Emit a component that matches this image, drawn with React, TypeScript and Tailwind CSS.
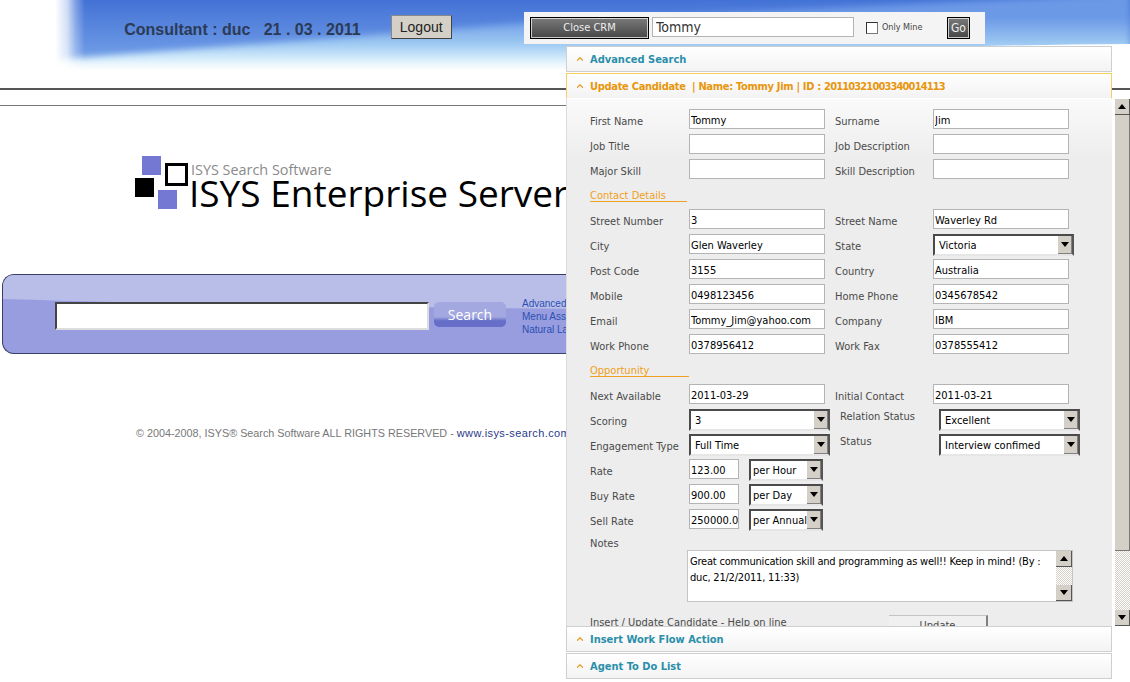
import React from 'react';
import { ChevronUp } from 'lucide-react';

const sans = 'font-["DejaVu_Sans_Condensed","Noto_Sans",sans-serif]';

const Field = ({ value = '', width = 'w-[136px]' }: { value?: string; width?: string }) => (
  <input
    readOnly
    value={value}
    className={`${width} h-5 shrink-0 border border-[#b4b4b4] bg-white pl-[1px] pt-[2px] text-[11px] text-black outline-none ${sans}`}
  />
);

const Select = ({ value, width = 'w-[141px]', pad = 'pl-1' }: { value: string; width?: string; pad?: string }) => (
  <div className={`${width} h-[22px] shrink-0 flex items-center border-2 border-[#4a4a4a] border-r-[#555] border-b-[#e6e6e6] bg-white text-[11px] text-black ${sans}`}>
    <span className={`flex-1 whitespace-nowrap overflow-hidden pt-[2px] ${pad}`}>{value}</span>
    <span className="w-[14px] h-[18px] shrink-0 flex items-center justify-center bg-[#d4d0c8] border-r border-b border-[#808080]">
      <span className="border-x-[4px] border-x-transparent border-t-[5px] border-t-black" />
    </span>
  </div>
);

const Label = ({ children, width = 'w-[99px]' }: { children: React.ReactNode; width?: string }) => (
  <span className={`${width} shrink-0 pt-[5px] text-[11px] leading-4 text-[#4a4a4a] ${sans}`}>{children}</span>
);

const Row = ({ children }: { children: React.ReactNode }) => (
  <div className="flex h-[25px] items-start">{children}</div>
);

const Pair = ({ a, av, b, bv }: { a: string; av?: string; b: string; bv?: string }) => (
  <Row>
    <Label>{a}</Label>
    <Field value={av} />
    <span className="w-[10px] shrink-0" />
    <Label width="w-[98px]">{b}</Label>
    <Field value={bv} />
  </Row>
);

const SectionTitle = ({ title, line }: { title: string; line: string }) => (
  <div className="flex h-[25px] items-start">
    <span className={`${line} h-[18px] border-b border-[#f0a020] pt-[7px] text-[11px] leading-[10px] text-[#f0a020] ${sans}`}>
      {title}
    </span>
  </div>
);

const AccordionHead = ({ children, active }: { children: React.ReactNode; active?: boolean }) => (
  <div
    className={`flex h-[26px] items-center gap-[5px] border pl-[8px] text-[11px] font-bold bg-linear-to-b from-white to-[#f3f3f3] ${sans} ${
      active ? 'border-[#f5d060] border-b-transparent text-[#e8960c]' : 'border-[#cfcfcf] text-[#2a8faa]'
    }`}
  >
    <ChevronUp size={10} strokeWidth={3} className="text-[#e8a030]" />
    <span className="whitespace-pre pt-[2px]">{children}</span>
  </div>
);

const ScrollButton = ({ up }: { up?: boolean }) => (
  <div className="flex h-4 items-center justify-center border-r border-b border-[#555] bg-[#d4d0c8]">
    <span className={`border-x-[4px] border-x-transparent ${up ? 'border-b-[5px] border-b-black' : 'border-t-[5px] border-t-black'}`} />
  </div>
);

const RateRow = ({ label, value, unit }: { label: string; value: string; unit: string }) => (
  <Row>
    <Label>{label}</Label>
    <Field value={value} width="w-[50px]" />
    <span className="w-[10px] shrink-0" />
    <Select value={unit} width="w-[74px]" pad="pl-[2px]" />
  </Row>
);

const CandidateForm = () => (
  <div className="flex-1 overflow-hidden border-l border-[#dcdcdc] pl-[23px] pt-[10px] bg-linear-to-b from-[#fafafa] to-[#ededed] to-[60px]">
    <Pair a="First Name" av="Tommy" b="Surname" bv="Jim" />
    <Pair a="Job Title" b="Job Description" />
    <Pair a="Major Skill" b="Skill Description" />
    <SectionTitle title="Contact Details" line="w-[97px]" />
    <Pair a="Street Number" av="3" b="Street Name" bv="Waverley Rd" />
    <Row>
      <Label>City</Label>
      <Field value="Glen Waverley" />
      <span className="w-[10px] shrink-0" />
      <Label width="w-[98px]">State</Label>
      <Select value="Victoria" width="w-[141px]" />
    </Row>
    <Pair a="Post Code" av="3155" b="Country" bv="Australia" />
    <Pair a="Mobile" av="0498123456" b="Home Phone" bv="0345678542" />
    <Pair a="Email" av="Tommy_Jim@yahoo.com" b="Company" bv="IBM" />
    <Pair a="Work Phone" av="0378956412" b="Work Fax" bv="0378555412" />
    <SectionTitle title="Opportunity" line="w-[99px]" />
    <Pair a="Next Available" av="2011-03-29" b="Initial Contact" bv="2011-03-21" />
    <Row>
      <Label>Scoring</Label>
      <Select value="3" />
      <span className="w-[10px] shrink-0" />
      <span className={`w-[99px] shrink-0 text-[11px] leading-4 text-[#4a4a4a] ${sans}`}>Relation Status</span>
      <Select value="Excellent" />
    </Row>
    <Row>
      <Label>Engagement Type</Label>
      <Select value="Full Time" />
      <span className="w-[10px] shrink-0" />
      <span className={`w-[99px] shrink-0 text-[11px] leading-4 text-[#4a4a4a] ${sans}`}>Status</span>
      <Select value="Interview confimed" />
    </Row>
    <RateRow label="Rate" value="123.00" unit="per Hour" />
    <RateRow label="Buy Rate" value="900.00" unit="per Day" />
    <RateRow label="Sell Rate" value="250000.0" unit="per Annual" />
    <div className={`h-[16px] pt-[3px] text-[11px] leading-[13px] text-[#4a4a4a] ${sans}`}>Notes</div>
    <div className="ml-[97px] flex h-[52px] w-[386px] border border-[#c4c4c4] bg-white">
      <p className={`flex-1 px-[2px] pt-[3px] text-[11px] leading-4 tracking-[-0.2px] text-black ${sans}`}>
        Great communication skill and programming as well!! Keep in mind! (By : duc, 21/2/2011, 11:33)
      </p>
      <div className="flex w-4 flex-col justify-between bg-[repeating-conic-gradient(#d4d0c8_0_25%,#ffffff_0_50%)] bg-[length:2px_2px]">
        <ScrollButton up />
        <ScrollButton />
      </div>
    </div>
    <div className={`mt-[13px] flex text-[11px] leading-4 text-[#4a4a4a] ${sans}`}>
      <span className="w-[299px]">Insert / Update Candidate - Help on line</span>
      <span className="flex h-8 w-[99px] justify-center border-t border-r-2 border-[#808080] border-t-[#c4c4c4] bg-[#f0f0f0] pt-[2px]">Update</span>
    </div>
  </div>
);

const CrmPanel = () => (
  <div className="absolute left-[524px] top-3 w-[606px]">
    <div className={`flex h-[32px] w-[461px] items-start gap-[3px] bg-[#f4f4f4] pl-[6px] pt-[5px] ${sans}`}>
      <button className="h-[22px] w-[119px] border border-black bg-linear-to-b from-[#7b7b7b] to-[#464646] text-[11px] text-[#eee] outline outline-1 -outline-offset-2 outline-white/70">
        Close CRM
      </button>
      <input readOnly value="Tommy" className={`h-5 w-[202px] border border-[#b4b4b4] bg-white pl-[3px] text-[14px] text-[#333] outline-none ${sans}`} />
      <span className="ml-[9px] mt-[5px] h-3 w-3 border border-[#777] border-t-[#333] border-l-[#333] bg-white" />
      <span className="ml-[1px] mt-[4px] w-[62px] whitespace-nowrap text-[9px] leading-3 text-[#444]">Only Mine</span>
      <button className="h-[22px] w-[23px] border border-black bg-linear-to-b from-[#7b7b7b] to-[#464646] text-[12px] text-[#eee] outline outline-1 -outline-offset-2 outline-white/70">Go</button>
    </div>
    <div className="ml-[42px] mt-[2px] flex h-[635px] flex-col">
      <div className="w-[546px]"><AccordionHead>Advanced Search</AccordionHead></div>
      <div className="mt-[1px] w-[546px]">
        <AccordionHead active>
          <span className="tracking-[-0.3px]">Update Candidate  | Name: Tommy Jim | ID : </span>
          <span className="tracking-[-0.85px]">20110321003340014113</span>
        </AccordionHead>
      </div>
      <div className="flex h-[527px] shrink-0 bg-white">
        <CandidateForm />
        <div className="ml-[3px] flex w-[15px] flex-col bg-[repeating-conic-gradient(#d4d0c8_0_25%,#ffffff_0_50%)] bg-[length:2px_2px]">
          <ScrollButton up />
          <div className="h-[436px] border-r border-b border-[#777] bg-[#d4d0c8]" />
          <div className="flex-1" />
          <ScrollButton />
        </div>
      </div>
      <div className="w-[546px]"><AccordionHead>Insert Work Flow Action</AccordionHead></div>
      <div className="mt-[1px] w-[546px]"><AccordionHead>Agent To Do List</AccordionHead></div>
    </div>
  </div>
);

const Banner = () => (
  <div className="relative flex h-[70px] items-start overflow-hidden bg-white">
    {/* sky swoosh behind the header */}
    <svg className="absolute inset-0" width="1130" height="70" viewBox="0 0 1130 70">
      <defs>
        <linearGradient id="dark" x1="0" y1="0" x2="0" y2="1">
          <stop offset="0" stopColor="#4372d6" />
          <stop offset="0.7" stopColor="#6a97e4" />
          <stop offset="1" stopColor="#7fabe9" />
        </linearGradient>
        <linearGradient id="light" gradientUnits="userSpaceOnUse" x1="0" y1="18" x2="0" y2="69">
          <stop offset="0" stopColor="#6c99e6" />
          <stop offset="0.5" stopColor="#9cc8f2" />
          <stop offset="0.8" stopColor="#d4ecfb" />
          <stop offset="1" stopColor="#ffffff" />
        </linearGradient>
        <linearGradient id="fade" x1="0" y1="0" x2="1" y2="0">
          <stop offset="0" stopColor="#ffffff" />
          <stop offset="0.4" stopColor="#ffffff" stopOpacity="0.75" />
          <stop offset="0.7" stopColor="#ffffff" stopOpacity="0.3" />
          <stop offset="1" stopColor="#ffffff" stopOpacity="0" />
        </linearGradient>
        <filter id="soft" x="-5%" y="-20%" width="110%" height="140%">
          <feGaussianBlur stdDeviation="3" />
        </filter>
      </defs>
      <rect x="50" width="1080" height="70" fill="url(#dark)" />
      <path d="M50 60 L567 20 L1130 -6 V80 H50Z" fill="url(#light)" filter="url(#soft)" />
      <path d="M560 70 Q800 46 1130 44 L1130 70Z" fill="#ffffff" />
      <rect x="0" width="55" height="70" fill="#ffffff" />
      <rect x="55" width="30" height="70" fill="url(#fade)" />
    </svg>
    <span className="relative -ml-[6px] mt-[21px] text-[11px] font-bold leading-4 text-[#2a5aa0]">E</span>
    <span className="relative ml-[124px] mt-[20px] whitespace-pre font-['Liberation_Sans',sans-serif] text-[16px] font-bold leading-5 text-[#2b3a55]">
      Consultant : duc   21 . 03 . 2011
    </span>
    <button className="relative ml-[30px] mt-[15px] h-6 w-[61px] border border-[#888] border-r-[#444] border-b-[#444] bg-[#d4d0c8] font-['Liberation_Sans',sans-serif] text-[14px] text-[#222]">
      Logout
    </button>
  </div>
);

const Logo = () => (
  <div className="ml-[135px] mt-[50px] flex h-[54px] items-start">
    <svg width="54" height="54" viewBox="0 0 54 54" className="shrink-0">
      <rect x="7" y="0" width="19" height="19" fill="#7478d2" />
      <rect x="31.5" y="8.5" width="20" height="20" fill="#fff" stroke="#000" strokeWidth="3" />
      <rect x="0" y="22" width="19" height="19" fill="#000" />
      <rect x="23" y="34" width="19" height="19" fill="#7478d2" />
    </svg>
    <div className="whitespace-nowrap font-['Open_Sans',sans-serif]">
      <div className="mt-[5px] ml-[2px] text-[14.4px] leading-[18px] text-[#8a8a8a]">ISYS Search Software</div>
      <div className="text-[37px] leading-[27px] text-black">ISYS Enterprise Server</div>
    </div>
  </div>
);

const SearchBand = () => (
  <div className="relative ml-[2px] mt-[64px] h-[80px] overflow-hidden rounded-l-[12px] border border-r-0 border-[#3a3f66] bg-[#989de0]">
    <svg className="absolute inset-0" width="1128" height="80" viewBox="0 0 1128 80">
      <path d="M0 0H1128V36Q400 36 0 24Z" fill="#b9bee9" />
    </svg>
    <div className="relative flex items-start pl-[52px] pt-[27px]">
      <input readOnly className="h-[28px] w-[374px] border-2 border-[#444] border-r-[#ddd] border-b-[#ddd] bg-white outline-none" />
      <button className="ml-[5px] h-[25px] w-[72px] rounded-[5px] bg-linear-to-b from-[#a3a8e0] from-60% to-[#666ec8] to-75% font-['Open_Sans',sans-serif] text-[14px] text-white">
        Search
      </button>
      <div className="ml-[16px] -mt-[5px] w-[44px] overflow-hidden whitespace-nowrap font-['Liberation_Sans',sans-serif] text-[10px] leading-[13px] text-[#2b50b0]">
        <div>Advanced Search</div>
        <div>Menu Assist</div>
        <div>Natural Language</div>
      </div>
    </div>
  </div>
);

export default function App() {
  return (
    <div className="relative h-[682px] w-[1130px] overflow-hidden bg-white">
      <Banner />
      <div className="mt-[18px] h-[2px] bg-[#555]" />
      <div className="mt-[15px] h-px bg-[#777]" />
      <Logo />
      <SearchBand />
      <p className="ml-[136px] mt-[71px] whitespace-nowrap font-['Liberation_Sans',sans-serif] text-[10.8px] text-[#777]">
        © 2004-2008, ISYS® Search Software ALL RIGHTS RESERVED - <span className="text-[11px] tracking-[0.4px] text-[#2a3a8a]">www.isys-search.com</span>
      </p>
      <CrmPanel />
    </div>
  );
}
